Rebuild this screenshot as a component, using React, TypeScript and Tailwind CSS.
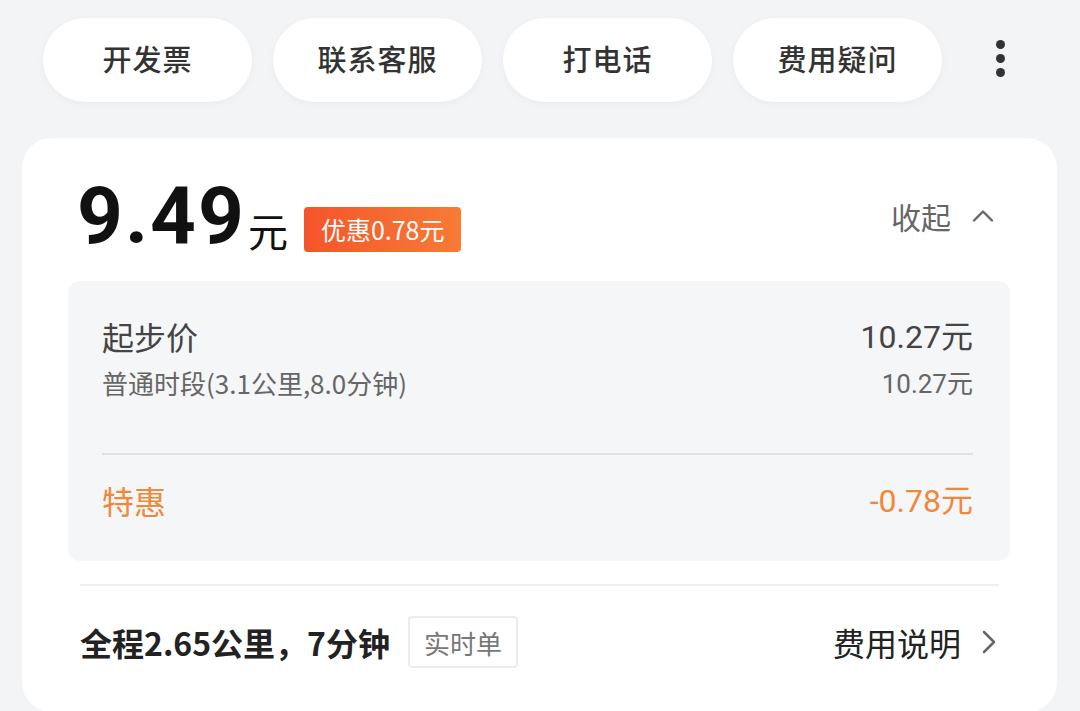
import { ChevronUp, ChevronRight } from "lucide-react";

const actions = ["开发票", "联系客服", "打电话", "费用疑问"];

const cjk = "font-['Noto_Sans_CJK_SC','Noto_Sans',sans-serif]";

const App = () => {
    return (
        <div className={`w-[1080px] h-[711px] overflow-hidden bg-[#f3f4f6] ${cjk}`}>
            <div className="flex items-center pl-[43px] pt-[18px] gap-[21px]">
                {actions.map((item, key) => (
                    <div
                        key={key}
                        className="w-[209px] h-[84px] rounded-full bg-white shadow-[0_2px_8px_rgba(0,0,0,0.04)] flex items-center justify-center text-[29px] leading-[40px] pb-[4px] font-medium text-[#333] tracking-[1px]"
                    >
                        {item}
                    </div>
                ))}
                <div className="ml-[33px] flex flex-col gap-[5px] pb-[4px]">
                    <span className="w-[9px] h-[9px] rounded-full bg-[#333]" />
                    <span className="w-[9px] h-[9px] rounded-full bg-[#333]" />
                    <span className="w-[9px] h-[9px] rounded-full bg-[#333]" />
                </div>
            </div>

            <div className="mt-[36px] ml-[22px] w-[1035px] h-[574px] bg-white rounded-[30px] px-[46px] pt-[38px]">
                <div className="flex items-center justify-between pl-[9px] pr-[10px]">
                    <div className="flex items-end">
                        <span className="font-['Roboto',sans-serif] font-bold text-[80px] leading-[80px] tracking-[2px] text-[#111]">9.49</span>
                        <span className="text-[40px] leading-[48px] text-[#111] ml-[2px] mb-[2px]">元</span>
                        <span className="ml-[16px] mb-[4px] h-[45px] px-[17px] rounded-[4px] bg-gradient-to-r from-[#f4542a] to-[#f77b36] text-white text-[25px] flex items-center">
                            优惠0.78元
                        </span>
                    </div>
                    <div className="flex items-center gap-[14px] text-[#666] text-[30px]">
                        <span>收起</span>
                        <ChevronUp size={36} strokeWidth={1.6} />
                    </div>
                </div>

                <div className="mt-[25px] w-[942px] h-[280px] rounded-[12px] bg-[#f5f6f8] pl-[34px] pr-[37px] pt-[33px]">
                    <div className="flex justify-between items-center text-[32px] text-[#444] leading-[40px]">
                        <span>起步价</span>
                        <span className="font-['Roboto',sans-serif]">10.27<span className={cjk}>元</span></span>
                    </div>
                    <div className="mt-[8px] flex justify-between items-center text-[26px] text-[#666] leading-[34px]">
                        <span>普通时段(3.1公里,8.0分钟)</span>
                        <span className="font-['Roboto',sans-serif]">10.27<span className={cjk}>元</span></span>
                    </div>
                    <div className="mt-[52px] h-[2px] bg-[#dfe0e3]" />
                    <div className="mt-[23px] flex justify-between items-center text-[32px] text-[#f0883a] leading-[40px]">
                        <span>特惠</span>
                        <span className="font-['Roboto',sans-serif]">-0.78<span className={cjk}>元</span></span>
                    </div>
                </div>

                <div className="mt-[23px] mx-[12px] h-[2px] bg-[#efefef]" />

                <div className="mt-[30px] mx-[12px] flex items-center justify-between">
                    <div className="flex items-center">
                        <span className="text-[32px] font-bold text-[#222]">全程2.65公里，7分钟</span>
                        <span className="ml-[18px] h-[52px] px-[14px] border-[2px] border-[#ececec] rounded-[4px] flex items-center text-[26px] text-[#777]">实时单</span>
                    </div>
                    <div className="flex items-center gap-[8px] text-[32px] text-[#222]">
                        <span>费用说明</span>
                        <ChevronRight size={40} strokeWidth={1.5} className="text-[#666] mr-[-10px]" />
                    </div>
                </div>
            </div>
        </div>
    );
};

export default App;
